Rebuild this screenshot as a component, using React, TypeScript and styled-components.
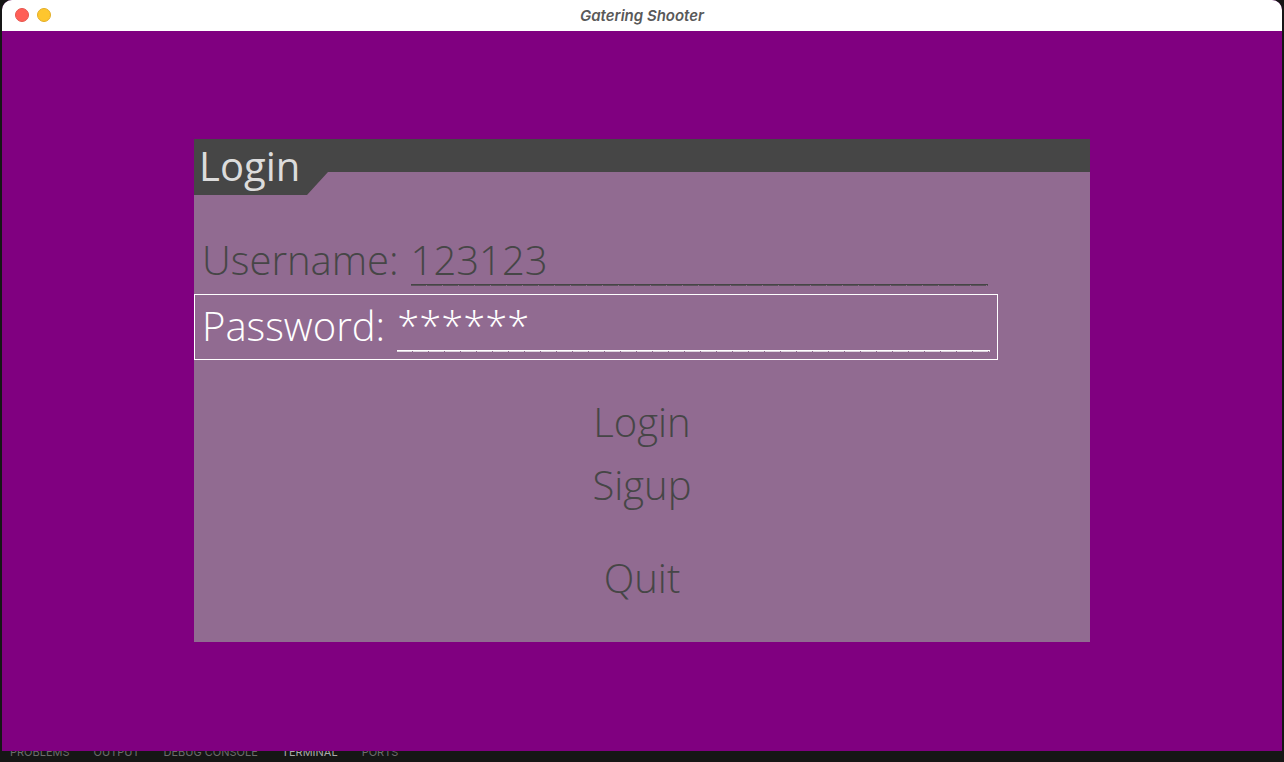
import React, { useState } from "react";
import styled, { createGlobalStyle } from "styled-components";

const GlobalStyle = createGlobalStyle`
  *, *::before, *::after { box-sizing: border-box; }
  body { margin: 0; background: #161616; }
  button, input { font: inherit; color: inherit; border: 0; padding: 0; background: none; }
`;

const Desktop = styled.div`
  display: flex;
  flex-direction: column;
  height: 100vh;
  overflow: hidden;
`;

const Window = styled.section`
  flex: 1;
  display: flex;
  flex-direction: column;
  margin: 0 2px;
  border-radius: 10px 10px 0 0;
  overflow: hidden;
  background: #800080;
`;

const TitleBar = styled.header`
  display: grid;
  grid-template-columns: 1fr auto 1fr;
  align-items: center;
  height: 31px;
  padding: 0 13px 1px;
  background: #ffffff;
`;

const WindowControls = styled.div`
  display: flex;
  gap: 8px;
`;

const ControlDot = styled.button<{ $fill: string; $edge: string }>`
  width: 14px;
  height: 14px;
  border: 1px solid ${(p) => p.$edge};
  border-radius: 50%;
  background: ${(p) => p.$fill};
`;

const WindowTitle = styled.h1`
  margin: 0;
  padding-top: 2px;
  font: italic 600 15px/20px Inter, sans-serif;
  color: #595959;
`;

const Stage = styled.main`
  flex: 1;
  display: flex;
  align-items: center;
  justify-content: center;
  padding-bottom: 1px;
`;

const Menu = styled.form`
  width: 70%;
  padding-bottom: 35px;
  background: #916b91;
  font: 300 40px/58px "Open Sans", sans-serif;
  color: #464646;
`;

const MenuHeader = styled.div`
  height: 56px;
  padding-left: 5px;
  background: #464646;
  clip-path: polygon(0 0, 100% 0, 100% 33px, 134px 33px, 113px 100%, 0 100%);
`;

const MenuTitle = styled.h2`
  margin: 0;
  font-size: 40px;
  font-weight: 400;
  line-height: 54px;
  color: #dcdcdc;
`;

const Fields = styled.div`
  display: flex;
  flex-direction: column;
  align-items: flex-start;
  margin: 33px 0;
`;

const Field = styled.label<{ $active?: boolean }>`
  display: flex;
  gap: 12px;
  padding: 2px 7px 4px;
  border: 1px solid ${(p) => (p.$active ? "#ffffff" : "transparent")};
  color: ${(p) => (p.$active ? "#ffffff" : "inherit")};
`;

const FieldInput = styled.input<{ $slots: number }>`
  --soft: color-mix(in srgb, currentColor 70%, transparent);
  width: ${(p) => p.$slots * 16 + 1}px;
  height: 58px;
  outline: none;
  background:
    linear-gradient(currentColor, currentColor) 0 53px / 100% 1px no-repeat,
    repeating-linear-gradient(90deg, var(--soft) 0 15px, transparent 15px 16px) 0 54px / 100% 1px no-repeat;
`;

const Actions = styled.div`
  display: flex;
  flex-direction: column;
  align-items: center;
  gap: 5px;
`;

const Action = styled.button<{ $apart?: boolean }>`
  margin-top: ${(p) => (p.$apart ? 30 : 0)}px;
`;

const PanelTabs = styled.nav`
  display: flex;
  align-items: flex-end;
  gap: 24px;
  height: 11px;
  padding: 0 10px 3px;
  overflow: hidden;
`;

const PanelTab = styled.button<{ $active?: boolean }>`
  font: 11px/14px Inter, sans-serif;
  color: ${(p) => (p.$active ? "#a8a8a8" : "#6c6c6c")};
`;

const tabs = ["PROBLEMS", "OUTPUT", "DEBUG CONSOLE", "TERMINAL", "PORTS"];

export default function App() {
  const [username, setUsername] = useState("123123");
  const [password, setPassword] = useState("******");

  return (
    <>
      <GlobalStyle />
      <Desktop>
        <Window>
          <TitleBar>
            <WindowControls>
              <ControlDot type="button" aria-label="Close" $fill="#ff5f57" $edge="#e5564f" />
              <ControlDot type="button" aria-label="Minimize" $fill="#fec62e" $edge="#e2ae28" />
            </WindowControls>
            <WindowTitle>Gatering Shooter</WindowTitle>
          </TitleBar>
          <Stage>
            <Menu onSubmit={(e) => e.preventDefault()}>
              <MenuHeader>
                <MenuTitle>Login</MenuTitle>
              </MenuHeader>
              <Fields>
                <Field>
                  Username:
                  <FieldInput $slots={36} value={username} onChange={(e) => setUsername(e.target.value)} />
                </Field>
                <Field $active>
                  Password:
                  <FieldInput
                    $slots={37}
                    value={password}
                    onChange={(e) => setPassword("*".repeat(e.target.value.length))}
                  />
                </Field>
              </Fields>
              <Actions>
                <Action type="submit">Login</Action>
                <Action type="button">Sigup</Action>
                <Action type="button" $apart>
                  Quit
                </Action>
              </Actions>
            </Menu>
          </Stage>
        </Window>
        <PanelTabs>
          {tabs.map((tab) => (
            <PanelTab key={tab} type="button" $active={tab === "TERMINAL"}>
              {tab}
            </PanelTab>
          ))}
        </PanelTabs>
      </Desktop>
    </>
  );
}
